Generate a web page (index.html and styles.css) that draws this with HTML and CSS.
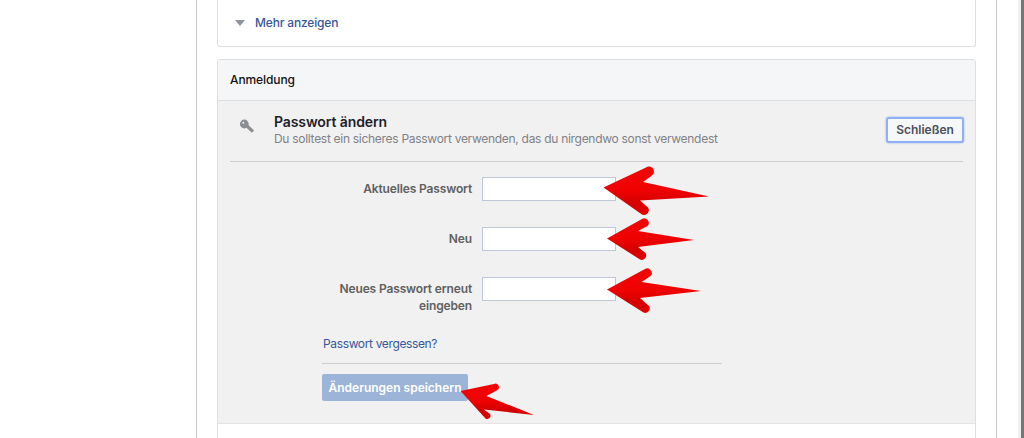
FILE: index.html
```html
<!DOCTYPE html>
<html lang="de">
<head>
<meta charset="utf-8">
<title>Anmeldung</title>
<link rel="stylesheet" href="styles.css">
</head>
<body>
<div class="page">
  <div class="spacer"></div>
  <main class="column">
    <section class="card card-top">
      <span class="triangle"></span>
      <a class="more">Mehr anzeigen</a>
    </section>
    <section class="card card-login">
      <header class="card-head">Anmeldung</header>
      <div class="card-body">
        <div class="pw-head">
          <svg class="key" width="16" height="16" viewBox="0 0 16 16">
            <circle cx="5.3" cy="5" r="4.4" fill="#8b8e93"/>
            <circle cx="4.3" cy="3.8" r="1" fill="#f1f1f1"/>
            <path d="M7.5 6.5 L14 12.6" stroke="#8b8e93" stroke-width="3.2" fill="none"/>
          </svg>
          <div class="pw-title">
            <h2>Passwort ändern</h2>
            <p>Du solltest ein sicheres Passwort verwenden, das du nirgendwo sonst verwendest</p>
          </div>
          <button class="close">Schließen</button>
        </div>
        <form class="form">
          <label class="lbl">Aktuelles Passwort</label>
          <input class="field" type="password">
          <label class="lbl">Neu</label>
          <input class="field" type="password">
          <label class="lbl">Neues Passwort erneut eingeben</label>
          <input class="field" type="password">
        </form>
        <a class="forgot">Passwort vergessen?</a>
        <div class="form-foot">
          <button class="save">Änderungen speichern</button>
        </div>
      </div>
      <div class="card-tail"></div>
    </section>
  </main>
  <div class="rail"><span class="scroll"></span></div>
</div>
<svg class="arrows" width="1024" height="438" viewBox="0 0 1024 438">
  <defs>
    <linearGradient id="red" x1="0" y1="0" x2="0" y2="1">
      <stop offset="0" stop-color="#f20505"/>
      <stop offset="0.5" stop-color="#ee0202"/>
      <stop offset="0.75" stop-color="#d40000"/>
      <stop offset="1" stop-color="#e40000"/>
    </linearGradient>
  </defs>
  <path fill="url(#red)" d="M603.5 187.5 L646 167.5 A4.8 4.8 0 0 1 652 175.5 L643 182 L709 196.5 L640 200.5 L648 207.5 A4.8 4.8 0 0 1 642 214.5 Z"/>
  <path fill="url(#red)" d="M607 238.5 L642 219 A4.5 4.5 0 0 1 647.5 226 L638 231 L694 240 L638 247 L645.5 253 A4.5 4.5 0 0 1 640 259.5 Z"/>
  <path fill="url(#red)" d="M607 289.5 L645 269 A4.5 4.5 0 0 1 650.5 276 L641.5 282 L701 291 L640 298 L649 306 A4.5 4.5 0 0 1 643.5 312.5 Z"/>
  <path fill="url(#red)" d="M460.5 391 L494 384 A3.5 3.5 0 0 1 497.5 390 L486.5 396 L534 415 L484 409.5 L490 414 A3.3 3.3 0 0 1 485.5 418.5 Z"/>
</svg>
</body>
</html>
```

FILE: styles.css
```css
* { box-sizing: border-box; }
html, body { margin: 0; height: 438px; overflow: hidden; background: #fff; }
body { font-family: Inter, "Liberation Sans", sans-serif; font-size: 12px; color: #1d2129; position: relative; }
.page { display: flex; height: 438px; }
.spacer { width: 196px; flex: none; }
.column { width: 801px; flex: none; border-left: 1px solid #c8c8c8; border-right: 1px solid #c8c8c8; padding: 0 20px; }
.rail { flex: 1; display: flex; justify-content: flex-end; }
.scroll { width: 6px; border-left: 3px solid #f0f0f0; background: #777; }

.card { border: 1px solid #dddfe2; background: #fff; }
.card-top { height: 47px; border-top: 0; border-radius: 0 0 3px 3px; display: flex; align-items: center; padding: 0 0 1px 17px; }
.triangle { width: 0; height: 0; border-left: 5.5px solid transparent; border-right: 5.5px solid transparent; border-top: 6px solid #8d949e; margin-right: 10px; }
.more { font-weight: 500; color: #365899; letter-spacing: -0.16px; }

.card-login { margin-top: 12px; border-radius: 3px 3px 0 0; }
.card-head { height: 41px; padding: 0 12px 2px; display: flex; align-items: center; font-weight: 500; background: #f5f6f7; border-bottom: 1px solid #dddfe2; letter-spacing: -0.1px; color: #111; }
.card-body { height: 323px; background: #f1f1f1; border-bottom: 1px solid #e4e4e4; padding: 0 12px; }
.card-tail { height: 20px; }

.pw-head { height: 61px; border-bottom: 1px solid #cdcdcd; display: flex; align-items: flex-start; padding-top: 12px; }
.key { flex: none; margin: 6px 19px 0 9px; }
.pw-title { flex: 1; }
.pw-title h2 { margin: 0; font-size: 14px; line-height: 17px; font-weight: 600; color: #1d2129; letter-spacing: -0.1px; }
.pw-title p { margin: 1px 0 0; font-size: 12px; line-height: 16px; color: #7f8287; letter-spacing: -0.29px; }
.close { width: 78px; height: 26px; margin: 4px -1px 0 0; padding: 0 0 1px; font: 600 12px Inter, "Liberation Sans", sans-serif; color: #4b4f56; background: #f6f7f9; border: 2px solid #8fb0f5; border-radius: 3px; box-shadow: 0 0 2px #8fb0f5; }

.form { display: grid; grid-template-columns: 150px 134px; column-gap: 10px; row-gap: 26px; margin: 15px 0 0 92px; align-items: start; }
.lbl { text-align: right; font-weight: 600; color: #606060; line-height: 17px; padding-top: 3px; letter-spacing: -0.14px; }
.field { height: 24px; width: 134px; background: #fff; border: 1px solid #bdc7d8; padding: 0; }
.forgot { display: block; margin: 21px 0 0 93px; line-height: 17px; color: #365899; letter-spacing: -0.36px; }
.form-foot { width: 400px; margin: 11px 0 0 92px; border-top: 1px solid #cdcdcd; padding-top: 10px; }
.save { width: 146px; height: 27px; padding: 0; font: 600 12px Inter, "Liberation Sans", sans-serif; color: #fff; background: #9cb4d8; border: 0; border-radius: 2px; }

.arrows { position: absolute; left: 0; top: 0; pointer-events: none; }
```
